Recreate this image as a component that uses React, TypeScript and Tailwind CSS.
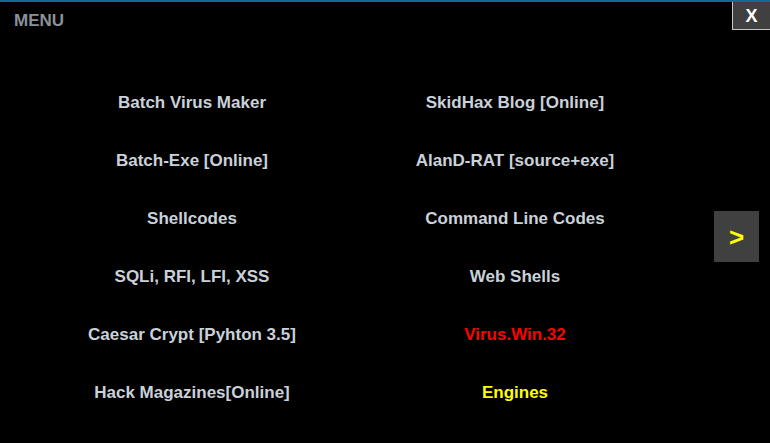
import React from "react";

const left = [
  { t: "Batch Virus Maker", c: "text-[#c9d1da]" },
  { t: "Batch-Exe [Online]", c: "text-[#c9d1da]" },
  { t: "Shellcodes", c: "text-[#c9d1da]" },
  { t: "SQLi, RFI, LFI, XSS", c: "text-[#c9d1da]" },
  { t: "Caesar Crypt [Pyhton 3.5]", c: "text-[#c9d1da]" },
  { t: "Hack Magazines[Online]", c: "text-[#c9d1da]" },
];
const right = [
  { t: "SkidHax Blog [Online]", c: "text-[#c9d1da]" },
  { t: "AlanD-RAT [source+exe]", c: "text-[#c9d1da]" },
  { t: "Command Line Codes", c: "text-[#c9d1da]" },
  { t: "Web Shells", c: "text-[#c9d1da]" },
  { t: "Virus.Win.32", c: "text-[#ff0000]" },
  { t: "Engines", c: "text-[#ffff00]" },
];

export default function App() {
  return (
    <div
      className="w-[770px] h-[443px] bg-black overflow-hidden flex flex-col"
      style={{ fontFamily: '"Liberation Sans", Arial, sans-serif' }}
    >
      <div className="h-[2px] bg-[#0f6aa0] shrink-0" />
      <div className="flex h-[28px] shrink-0">
        <div className="pl-[14px] pt-[10px] text-[17px] leading-none font-bold text-[#8a9199]">MENU</div>
        <div className="ml-auto w-[38px] h-[28px] bg-[#404040] border-l border-b border-[#c8c8c8] flex items-center justify-center text-white text-[18px] font-bold leading-none">
          X
        </div>
      </div>
      <div className="flex">
        <div className="w-[384px] flex flex-col pt-[60px]">
          {left.map((x) => (
            <div key={x.t} className={`h-[58px] flex items-start justify-center text-[17px] font-bold leading-[26px] ${x.c}`}>
              {x.t}
            </div>
          ))}
        </div>
        <div className="w-[262px] flex flex-col pt-[60px]">
          {right.map((x) => (
            <div key={x.t} className={`h-[58px] flex items-start justify-center text-[17px] font-bold leading-[26px] ${x.c}`}>
              {x.t}
            </div>
          ))}
        </div>
        <div className="pl-[68px] pt-[181px]">
          <div className="w-[45px] h-[51px] bg-[#404040] flex items-center justify-center text-[#ffff00] text-[26px] font-bold leading-none">
            &gt;
          </div>
        </div>
      </div>
    </div>
  );
}
